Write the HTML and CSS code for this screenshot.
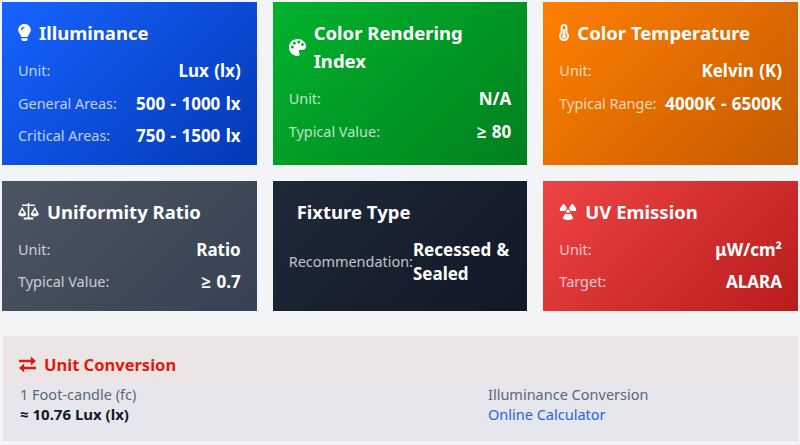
FILE: index.html
```html
<!DOCTYPE html>
<html lang="en">
<head>
<meta charset="utf-8">
<title>Lighting Specifications</title>
<link rel="stylesheet" href="styles.css">
</head>
<body>
<main class="page">
  <section class="grid">
    <article class="card card-blue">
      <h3 class="card-title">
        <svg class="icon icon-bulb" viewBox="0 0 14 20"><path fill="currentColor" fill-rule="evenodd" d="M7 0C3 0 0 3 0 6.800c0 2.500 1.600 3.900 2.500 5.500.5.900.8 1.500.9 2.200h7.200c.1-.7.4-1.300.9-2.200C12.400 10.700 14 9.300 14 6.800 14 3 11 0 7 0zM3 6.800C3 4.600 4.800 3 7 3v1.500C5.700 4.500 4.500 5.500 4.500 6.800z"/><path fill="currentColor" d="M3.500 15.800h7V17c0 .3-.1.500-.3.700l-.8.900c-.2.300-.6.400-.9.400H5.500c-.3 0-.7-.1-.9-.4l-.8-.9c-.2-.2-.3-.4-.3-.7z"/></svg>
        <span>Illuminance</span>
      </h3>
      <div class="rows">
        <div class="row"><span class="label">Unit:</span><span class="value">Lux (lx)</span></div>
        <div class="row"><span class="label">General Areas:</span><span class="value">500 - 1000 lx</span></div>
        <div class="row"><span class="label">Critical Areas:</span><span class="value">750 - 1500 lx</span></div>
      </div>
    </article>
    <article class="card card-green">
      <h3 class="card-title">
        <svg class="icon icon-palette" viewBox="0 0 20 20"><path fill="currentColor" fill-rule="evenodd" d="M10 0C4.500 0 0 4.200 0 9.700 0 15.400 4.500 20 10 20c1.500 0 2.600-1.100 2.600-2.500 0-.7-.3-1.200-.6-1.700-.3-.4-.5-.8-.5-1.300 0-1.100.9-1.900 2-1.900h2.900c2.200 0 3.600-1.500 3.600-3.700C20 3.800 15.500 0 10 0zM4 11.300a1.700 1.700 0 1 1 0-3.400 1.700 1.700 0 0 1 0 3.400zm2.300-4.600a1.700 1.700 0 1 1 0-3.400 1.700 1.700 0 0 1 0 3.400zm5.200-1.500a1.700 1.700 0 1 1 0-3.400 1.700 1.700 0 0 1 0 3.400zm4.400 3.100a1.700 1.700 0 1 1 0-3.400 1.700 1.700 0 0 1 0 3.400z"/></svg>
        <span>Color Rendering Index</span>
      </h3>
      <div class="rows">
        <div class="row"><span class="label">Unit:</span><span class="value">N/A</span></div>
        <div class="row"><span class="label">Typical Value:</span><span class="value">≥ 80</span></div>
      </div>
    </article>
    <article class="card card-orange">
      <h3 class="card-title">
        <svg class="icon icon-thermo" viewBox="0 0 10 18"><path fill="none" stroke="currentColor" stroke-width="2" d="M2.600 3.400a2.400 2.400 0 0 1 4.800 0v5.500a4 4 0 1 1-4.800 0z"/><circle cx="5" cy="12.400" r="2" fill="currentColor"/><rect x="4.200" y="5" width="1.600" height="7" fill="currentColor"/></svg>
        <span>Color Temperature</span>
      </h3>
      <div class="rows">
        <div class="row"><span class="label">Unit:</span><span class="value">Kelvin (K)</span></div>
        <div class="row"><span class="label">Typical Range:</span><span class="value">4000K - 6500K</span></div>
      </div>
    </article>
    <article class="card card-slate">
      <h3 class="card-title">
        <svg class="icon icon-scale" viewBox="0 0 21 17"><path fill="currentColor" d="M9.700 0h1.600v1.600h5.500v1.500h-5.500v11.400h4v1.900H5.700v-1.900h4V3.100H4.200V1.600h5.500z"/><path fill="currentColor" fill-rule="evenodd" d="M4.200 3.800 8.200 11c0 1.600-1.800 2.500-4 2.500S.2 12.600.2 11zm0 3L2.300 10.300h3.800zM16.800 3.800l4 7.200c0 1.600-1.800 2.500-4 2.500s-4-.9-4-2.500zm0 3-1.900 3.500h3.800z"/></svg>
        <span>Uniformity Ratio</span>
      </h3>
      <div class="rows">
        <div class="row"><span class="label">Unit:</span><span class="value">Ratio</span></div>
        <div class="row"><span class="label">Typical Value:</span><span class="value">≥ 0.7</span></div>
      </div>
    </article>
    <article class="card card-dark">
      <h3 class="card-title">
        <span class="icon-empty"></span>
        <span>Fixture Type</span>
      </h3>
      <div class="rows">
        <div class="row"><span class="label">Recommendation:</span><span class="value value-left">Recessed &amp; Sealed</span></div>
      </div>
    </article>
    <article class="card card-red">
      <h3 class="card-title">
        <svg class="icon icon-rad" viewBox="0 0 18 17"><path fill="currentColor" d="M5.300 1 8 5.600c-.8.400-1.400 1.300-1.500 2.300H1.200C.9 7.900.6 7.600.7 7.200 1 4.700 2.600 2.500 4.600 1.100c.2-.2.500-.2.700-.1zM12.700 1 10 5.600c.8.400 1.400 1.300 1.500 2.300h5.300c.3 0 .6-.3.500-.7-.3-2.500-1.900-4.700-3.900-6.100-.2-.2-.5-.2-.7-.1zM6.500 10.300 3.900 14.900c-.2.300-.1.600.2.800 1.500.8 3.100 1.300 4.900 1.300s3.400-.5 4.900-1.300c.3-.2.400-.5.200-.8l-2.600-4.600c-.7.600-1.500 1-2.500 1s-1.800-.4-2.500-1z"/><circle cx="9" cy="8.300" r="1.700" fill="currentColor"/></svg>
        <span>UV Emission</span>
      </h3>
      <div class="rows">
        <div class="row"><span class="label">Unit:</span><span class="value">μW/cm²</span></div>
        <div class="row"><span class="label">Target:</span><span class="value">ALARA</span></div>
      </div>
    </article>
  </section>
  <section class="panel">
    <header class="panel-head">
      <svg class="icon-swap" viewBox="0 0 18 17"><path fill="currentColor" d="M0 3.500h12.500V0L18 4.800l-5.500 4.700V6H0zM18 11H5.500V7.500L0 12.300 5.500 17v-3.500H18z"/></svg>
      <h4 class="panel-title">Unit Conversion</h4>
    </header>
    <div class="panel-body">
      <div class="conv">
        <div class="conv-label">1 Foot-candle (fc)</div>
        <div class="conv-value">≈ 10.76 Lux (lx)</div>
      </div>
      <div class="conv">
        <div class="conv-label">Illuminance Conversion</div>
        <a class="conv-link" href="#">Online Calculator</a>
      </div>
    </div>
  </section>
</main>
</body>
</html>
```
FILE: styles.css
```css
* { box-sizing: border-box; }
html, body { margin: 0; padding: 0; }
body {
  background: #f3f4f6;
  font-family: "Noto Sans", "Open Sans", "Liberation Sans", sans-serif;
  overflow: hidden;
}
.page { padding: 2px 2px 4px; }
.grid {
  display: grid;
  grid-template-columns: repeat(3, 1fr);
  gap: 16px;
}
.card {
  padding: 16px;
  color: #fff;
}
.card-blue { background: linear-gradient(135deg, #1763ff, #0239b5); }
.card-green { background: linear-gradient(135deg, #00b32c, #00801f); }
.card-orange { background: linear-gradient(135deg, #ff7f00, #c45a00); }
.card-slate { background: linear-gradient(135deg, #4b5563, #374151); }
.card-dark { background: linear-gradient(135deg, #1f2937, #111827); }
.card-red { background: linear-gradient(135deg, #ef4444, #b91c1c); }
.card-title {
  display: flex;
  align-items: center;
  margin: 0 0 12px;
  padding-top: 1px;
  font-size: 18.500px;
  line-height: 28px;
  font-weight: 700;
}
.icon { flex: none; margin-right: 8px; display: block; }
.icon-empty { width: 0; margin-right: 8px; }
.icon-bulb { width: 13px; height: 18px; }
.icon-palette { width: 17px; height: 17px; }
.icon-thermo { width: 10px; height: 18px; }
.icon-scale { width: 21px; height: 17px; }
.icon-rad { width: 18px; height: 17px; }
.rows { display: flex; flex-direction: column; gap: 8px; }
.row {
  display: flex;
  justify-content: space-between;
  align-items: center;
  line-height: 24.500px;
}
.label { flex: none; font-size: 14.450px; opacity: .72; }
.value { font-size: 17px; font-weight: 700; text-align: right; word-spacing: 1px; }
.value-left { text-align: left; }
.panel { margin: 25px 0 0 1px; }
.panel-head {
  display: flex;
  align-items: center;
  gap: 8px;
  height: 49px;
  padding: 9px 16px 0;
  background: #ebe5e5;
  color: #e0190f;
}
.icon-swap { width: 17px; height: 17px; flex: none; }
.panel-title { margin: 0; font-size: 16.500px; font-weight: 700; line-height: 28px; }
.panel-body {
  display: grid;
  grid-template-columns: 468px 1fr;
  padding: 0 16px 0 17px;
  height: 56px;
  background: #e5e7ed;
  font-size: 14.500px;
  line-height: 20px;
}
.conv { margin-top: -1px; }
.conv-label { color: #5f6672; }
.conv-value { color: #111827; font-weight: 700; font-size: 15px; }
.conv-link { color: #2563eb; text-decoration: none; }
```
